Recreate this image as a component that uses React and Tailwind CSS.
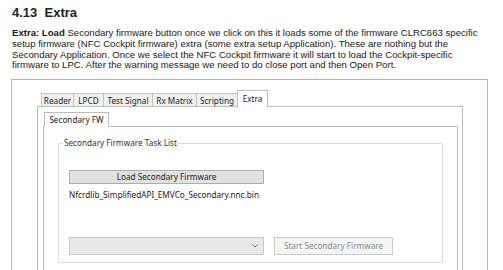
// Página de manual: secção 4.13 "Extra" com captura da janela NFC Cockpit

const ui = { fontFamily: '"Noto Sans", "Open Sans", sans-serif' }

/** Separador da barra superior (Reader, LPCD, ...). */
function Separador({ nome, largura, ativo }) {
  if (ativo) {
    return (
      <div
        className="flex h-[17px] items-start justify-center border border-b-0 border-[#bcbcbc] bg-white pt-[2px] text-[8.2px] leading-[11px] text-[#222] -mb-px relative z-10"
        style={{ width: largura }}
      >
        {nome}
      </div>
    )
  }
  return (
    <div
      className="flex h-[13px] items-center justify-center border border-r-0 border-b-0 border-[#c4c4c4] bg-[#f0f0f0] text-[8.2px] leading-[11px] text-[#222]"
      style={{ width: largura }}
    >
      {nome}
    </div>
  )
}

export default function App() {
  const separadores = [
    ['Reader', 32],
    ['LPCD', 30],
    ['Test Signal', 49],
    ['Rx Matrix', 44],
    ['Scripting', 41],
  ]

  return (
    <div
      className="h-[270px] w-[503px] overflow-hidden bg-white text-[#1a1a1a]"
      style={{ fontFamily: '"Liberation Sans", Arial, sans-serif' }}
    >
      <h2 className="pl-[12px] pt-[5px] text-[13px] font-bold leading-[16px] text-[#222]">
        4.13&nbsp; Extra
      </h2>

      <p className="mt-[7px] pl-[12px] text-[9.6px] leading-[10.8px] whitespace-nowrap">
        <b>Extra: Load</b> Secondary firmware button once we click on this it loads some of the firmware CLRC663 specific
        <br />
        setup firmware (NFC Cockpit firmware) extra (some extra setup Application). These are nothing but the
        <br />
        Secondary Application. Once we select the NFC Cockpit firmware it will start to load the Cockpit-specific
        <br />
        firmware to LPC. After the warning message we need to do close port and then Open Port.
      </p>

      {/* Janela capturada */}
      <div
        className="ml-[11px] mt-[8px] h-[200px] w-[477px] border border-b-0 border-[#b4b4b4] pl-[25px] pt-[10px]"
        style={ui}
      >
        <div className="ml-[4px] flex items-end">
          {separadores.map(([nome, w]) => (
            <Separador key={nome} nome={nome} largura={w} />
          ))}
          <Separador nome="Extra" largura={31} ativo />
        </div>

        {/* Painel do separador Extra */}
        <div className="h-[170px] w-[426px] border border-b-0 border-[#bcbcbc] pl-[5px] pt-[5px]">
          <div className="ml-px flex h-[15px] w-[65px] items-center justify-center border border-b-0 border-[#bcbcbc] bg-white text-[8.2px] text-[#222] -mb-px relative z-10">
            Secondary FW
          </div>

          <div className="h-[150px] w-[415px] border border-b-0 border-[#bcbcbc] pl-[14px] pt-[16px]">
            {/* Grupo */}
            <div className="relative flex h-[120px] w-[385px] flex-col rounded-[2px] border border-[#dcdcdc] pl-[10px] pb-[7px] pt-[26px]">
              <span className="absolute -top-[7px] left-[4px] bg-white px-px text-[8.2px] leading-[12px] text-[#333]">
                Secondary Firmware Task List
              </span>

              <button className="flex h-[14px] w-[195px] items-center justify-center border border-[#adadad] bg-[#e1e1e1] text-[8.2px] leading-none text-[#222]">
                Load Secondary Firmware
              </button>
              <div className="mt-[5px] text-[8.2px] leading-[11px] text-[#222]">
                Nfcrdlib_SimplifiedAPI_EMVCo_Secondary.nnc.bin
              </div>

              <div className="mt-auto flex gap-[10px]">
                <div className="flex h-[18px] w-[195px] items-center justify-end border border-[#c8c8c8] bg-[#e8e8e8] pr-[5px] text-[#777]">
                  <svg width="6" height="4" viewBox="0 0 6 4">
                    <path d="M0.5 0.5 L3 3 L5.5 0.5" fill="none" stroke="#777" strokeWidth="1" />
                  </svg>
                </div>
                <button className="flex h-[18px] w-[119px] items-center justify-center border border-[#cccccc] bg-[#f4f4f4] text-[8.2px] leading-none text-[#8a8a8a]">
                  Start Secondary Firmware
                </button>
              </div>
            </div>
          </div>
        </div>
      </div>
    </div>
  )
}
